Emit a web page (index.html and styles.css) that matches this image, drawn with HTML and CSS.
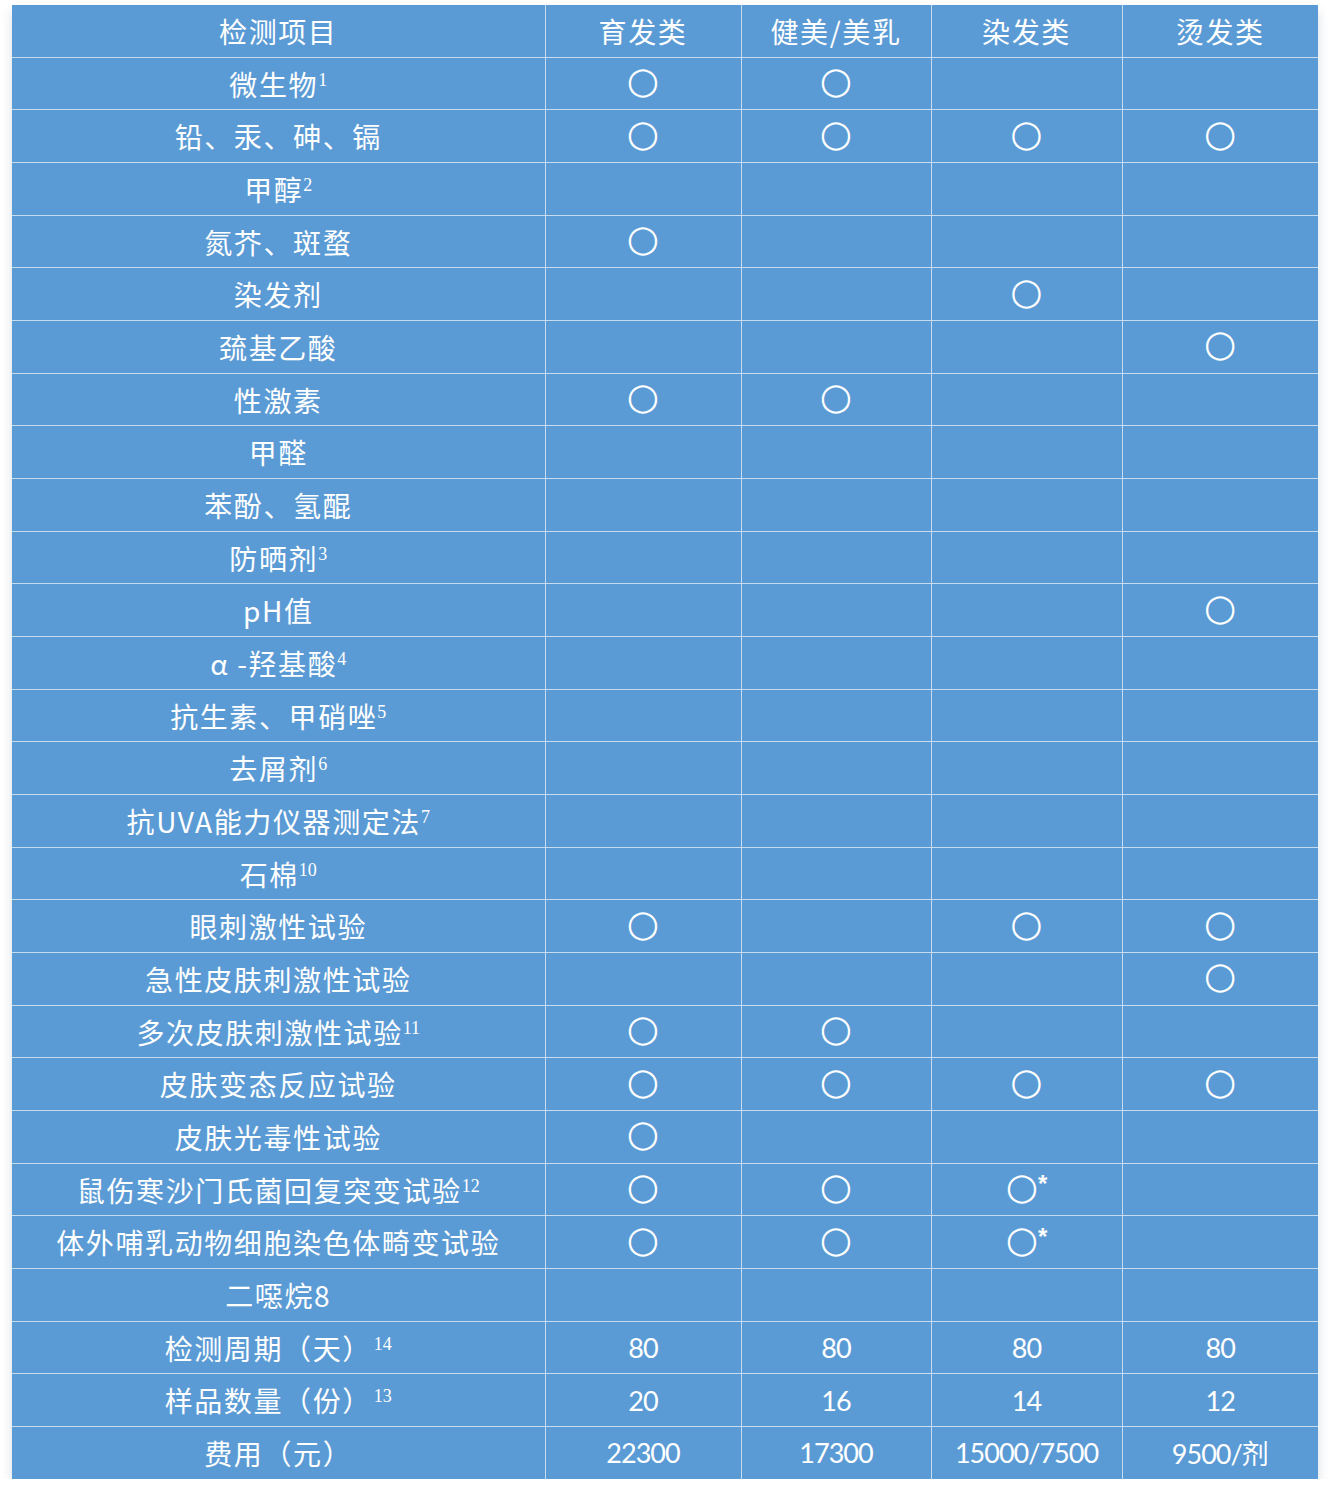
FILE: index.html
```html
<!DOCTYPE html>
<html lang="zh">
<head>
<meta charset="utf-8">
<title>检测项目</title>
<link rel="stylesheet" href="styles.css">
</head>
<body>
<table class="grid">
  <colgroup>
    <col class="c1"><col class="c2"><col class="c3"><col class="c4"><col class="c5">
  </colgroup>
  <tr><td>检测项目</td><td>育发类</td><td>健美/美乳</td><td>染发类</td><td>烫发类</td></tr>
  <tr><td>微生物<sup>1</sup></td><td><span class="mk">○</span></td><td><span class="mk">○</span></td><td></td><td></td></tr>
  <tr><td>铅、汞、砷、镉</td><td><span class="mk">○</span></td><td><span class="mk">○</span></td><td><span class="mk">○</span></td><td><span class="mk">○</span></td></tr>
  <tr><td>甲醇<sup>2</sup></td><td></td><td></td><td></td><td></td></tr>
  <tr><td>氮芥、斑蝥</td><td><span class="mk">○</span></td><td></td><td></td><td></td></tr>
  <tr><td>染发剂</td><td></td><td></td><td><span class="mk">○</span></td><td></td></tr>
  <tr><td>巯基乙酸</td><td></td><td></td><td></td><td><span class="mk">○</span></td></tr>
  <tr><td>性激素</td><td><span class="mk">○</span></td><td><span class="mk">○</span></td><td></td><td></td></tr>
  <tr><td>甲醛</td><td></td><td></td><td></td><td></td></tr>
  <tr><td>苯酚、氢醌</td><td></td><td></td><td></td><td></td></tr>
  <tr><td>防晒剂<sup>3</sup></td><td></td><td></td><td></td><td></td></tr>
  <tr><td>pH值</td><td></td><td></td><td></td><td><span class="mk">○</span></td></tr>
  <tr><td>α -羟基酸<sup>4</sup></td><td></td><td></td><td></td><td></td></tr>
  <tr><td>抗生素、甲硝唑<sup>5</sup></td><td></td><td></td><td></td><td></td></tr>
  <tr><td>去屑剂<sup>6</sup></td><td></td><td></td><td></td><td></td></tr>
  <tr><td>抗UVA能力仪器测定法<sup>7</sup></td><td></td><td></td><td></td><td></td></tr>
  <tr><td>石棉<sup>10</sup></td><td></td><td></td><td></td><td></td></tr>
  <tr><td>眼刺激性试验</td><td><span class="mk">○</span></td><td></td><td><span class="mk">○</span></td><td><span class="mk">○</span></td></tr>
  <tr><td>急性皮肤刺激性试验</td><td></td><td></td><td></td><td><span class="mk">○</span></td></tr>
  <tr><td>多次皮肤刺激性试验<sup>11</sup></td><td><span class="mk">○</span></td><td><span class="mk">○</span></td><td></td><td></td></tr>
  <tr><td>皮肤变态反应试验</td><td><span class="mk">○</span></td><td><span class="mk">○</span></td><td><span class="mk">○</span></td><td><span class="mk">○</span></td></tr>
  <tr><td>皮肤光毒性试验</td><td><span class="mk">○</span></td><td></td><td></td><td></td></tr>
  <tr><td>鼠伤寒沙门氏菌回复突变试验<sup>12</sup></td><td><span class="mk">○</span></td><td><span class="mk">○</span></td><td><span class="mk">○</span><span class="ast">*</span></td><td></td></tr>
  <tr><td>体外哺乳动物细胞染色体畸变试验</td><td><span class="mk">○</span></td><td><span class="mk">○</span></td><td><span class="mk">○</span><span class="ast">*</span></td><td></td></tr>
  <tr><td>二噁烷8</td><td></td><td></td><td></td><td></td></tr>
  <tr class="num"><td>检测周期（天）<sup class="gap">14</sup></td><td>80</td><td>80</td><td>80</td><td>80</td></tr>
  <tr class="num"><td>样品数量（份）<sup class="gap">13</sup></td><td>20</td><td>16</td><td>14</td><td>12</td></tr>
  <tr class="num"><td>费用（元）</td><td>22300</td><td>17300</td><td>15000/7500</td><td>9500/<span class="cj">剂</span></td></tr>
</table>
</body>
</html>
```
FILE: styles.css
```css
html, body {
  margin: 0;
  padding: 0;
  background: #ffffff;
}
body {
  padding: 5px 0 0 12px;
}
.grid {
  border-collapse: collapse;
  table-layout: fixed;
  width: 1306px;
  border-style: hidden;
  background: #5b9bd5;
  box-shadow: 0 6px 10px rgba(40, 70, 110, 0.18);
  font-family: "Noto Sans CJK SC", "Noto Sans", sans-serif;
  color: #ffffff;
}
.c1 { width: 533px; }
.c2 { width: 196px; }
.c3 { width: 190px; }
.c4 { width: 191px; }
.c5 { width: 196px; }
.grid td {
  height: 51.68px;
  padding: 0;
  border: 1px solid #c6dbf0;
  text-align: center;
  vertical-align: middle;
  font-size: 28px;
  letter-spacing: 1.6px;
  line-height: 1;
  white-space: nowrap;
}
.grid sup {
  font-family: "Liberation Serif", serif;
  font-size: 18px;
  letter-spacing: 0;
  vertical-align: 10px;
  line-height: 0;
}
.grid sup.gap {
  margin-left: 2px;
}
.mk {
  font-family: "DejaVu Sans", sans-serif;
  font-size: 37px;
  letter-spacing: 0;
  display: inline-block;
  line-height: 1;
  transform: translateY(-3px);
}
.ast {
  font-family: "Liberation Sans", sans-serif;
  font-size: 24px;
  font-weight: bold;
  vertical-align: 10px;
  letter-spacing: 0;
}
.num td + td {
  font-family: "Lato", sans-serif;
  font-size: 27px;
  letter-spacing: -1px;
}
.num .cj {
  font-family: "Noto Sans CJK SC", sans-serif;
  letter-spacing: 0;
}
```
